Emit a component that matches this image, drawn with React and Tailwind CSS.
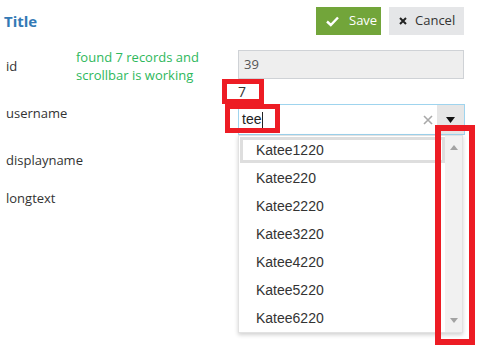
import React from "react";

const items = ["Katee1220", "Katee220", "Katee2220", "Katee3220", "Katee4220", "Katee5220", "Katee6220"];

export default function App() {
  return (
    <div className="relative w-[482px] h-[354px] bg-white overflow-hidden font-['Open_Sans',sans-serif] text-[13px] text-[#333]">
      {/* header */}
      <div className="flex items-center justify-between pt-[7px] pl-[4px] pr-[18px]">
        <div className="text-[15px] font-bold text-[#3379b5] leading-[28px]">Title</div>
        <div className="flex gap-[8px]">
          <button className="flex items-center h-[28px] w-[65px] bg-[#72a53a] text-white pl-[10px] gap-[10px]">
            <svg width="13" height="11" viewBox="0 0 13 11"><path d="M1 5.5 L4.8 9 L12 1.5" fill="none" stroke="white" strokeWidth="2.4" /></svg>
            <span>Save</span>
          </button>
          <button className="flex items-center h-[28px] w-[75px] bg-[#e5e6e8] text-[#333] pl-[10px] gap-[8px]">
            <svg width="8" height="8" viewBox="0 0 8 8"><path d="M1 1 L7 7 M7 1 L1 7" stroke="#222" strokeWidth="2" /></svg>
            <span>Cancel</span>
          </button>
        </div>
      </div>

      {/* rows */}
      <div className="flex flex-col mt-[15px] pl-[6px]">
        <div className="flex h-[54px]">
          <div className="w-[70px] pt-[7px] leading-[18px]">id</div>
          <div className="w-[162px] -mt-[2px] leading-[18px] text-[#2eb85c]">found 7 records and<br />scrollbar is working</div>
          <div className="w-[226px] h-[29px] bg-[#eeeeee] border border-[#cfd2d6] pl-[5px] flex items-center text-[#555]">39</div>
        </div>
        <div className="flex h-[47px]">
          <div className="w-[70px] leading-[18px]">username</div>
          <div className="w-[162px]"></div>
          <div className="w-[227px] h-[31px] border border-[#9fd4ee] flex items-stretch">
            <div className="flex-1 flex items-center pl-[3px] font-['Liberation_Sans',sans-serif] text-[14px] text-[#222]">
              tee<span className="inline-block w-px h-[16px] bg-[#222] ml-[1px]"></span>
            </div>
            <div className="w-[18px] flex items-center justify-center text-[#aaa]">
              <svg width="10" height="10" viewBox="0 0 10 10"><path d="M1 1 L9 9 M9 1 L1 9" stroke="#a9a9a9" strokeWidth="1.6" /></svg>
            </div>
            <div className="w-[27px] bg-[#e6e6e6] flex items-center justify-center">
              <svg width="9" height="6" viewBox="0 0 9 6"><path d="M0 0 H9 L4.5 6 Z" fill="#111" /></svg>
            </div>
          </div>
        </div>
        <div className="leading-[18px] h-[38px]">displayname</div>
        <div className="leading-[18px]">longtext</div>
      </div>

      {/* dropdown list overlay */}
      <div className="absolute left-[238px] top-[135px] w-[225px] h-[198px] bg-white border border-[#e2e2e2] shadow-[0_2px_4px_rgba(0,0,0,0.18)] flex font-['Liberation_Sans',sans-serif] text-[14px] text-[#333]">
        <div className="flex-1 flex flex-col pt-[1px]">
          {items.map((t, i) => (
            <div
              key={t}
              className={
                i === 0
                  ? "h-[26px] mb-[2px] ml-[1px] border-[3px] border-[#dedede] flex items-center pl-[13px]"
                  : "h-[28px] flex items-center pl-[17px]"
              }
            >
              {t}
            </div>
          ))}
        </div>
        <div className="w-[17px] bg-[#f1f1f1] flex flex-col justify-between items-center py-[9px]">
          <svg width="8" height="5" viewBox="0 0 8 5"><path d="M0 5 H8 L4 0 Z" fill="#a3a3a3" /></svg>
          <svg width="8" height="5" viewBox="0 0 8 5"><path d="M0 0 H8 L4 5 Z" fill="#a3a3a3" /></svg>
        </div>
      </div>

      {/* red annotation boxes */}
      <div className="absolute left-[222px] top-[79px] w-[42px] h-[25px] border-[5px] border-[#ed1c24] bg-white flex items-center pl-[11px] text-[14px] text-[#333] leading-none">7</div>
      <div className="absolute left-[225px] top-[104px] w-[55px] h-[29px] border-[5px] border-[#ed1c24]"></div>
      <div className="absolute left-[435px] top-[125px] w-[40px] h-[220px] border-[6px] border-[#ed1c24]"></div>
    </div>
  );
}
